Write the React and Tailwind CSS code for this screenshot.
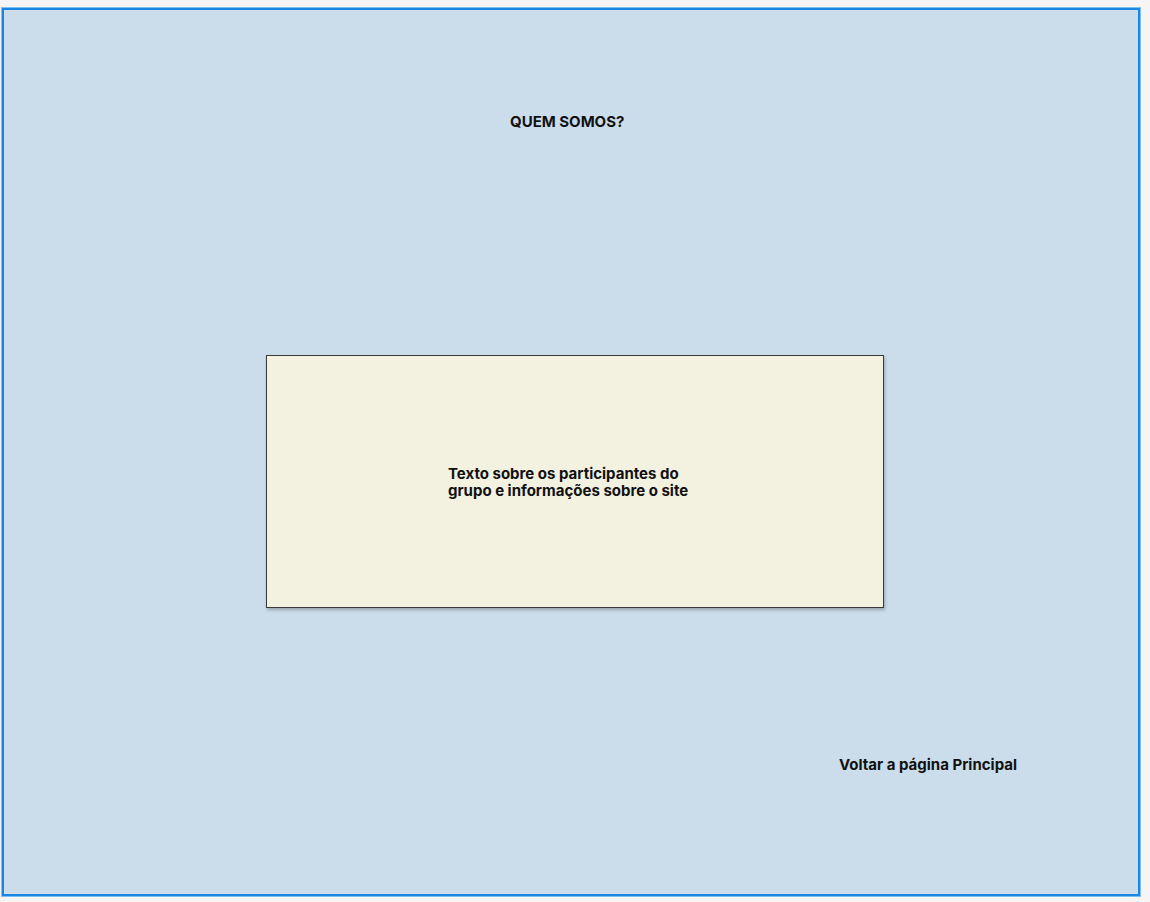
export default function App() {
  return (
    <div className="min-h-[902px] w-[1150px] bg-[#f5f5f5] pt-[7px] pl-px" style={{ fontFamily: 'Inter, "Noto Sans", sans-serif' }}>
      <div className="w-[1140px] h-[890px] border border-[#7cc0f2]">
        <div className="h-full border-2 border-[#1b87e0] bg-[#cbdcea] text-[#111111]">
          {/* Title */}
          <h1 className="pt-[103px] pl-[506px] text-[15px] leading-[18px] font-bold">QUEM SOMOS?</h1>

          {/* Content card */}
          <div className="mt-[224px] ml-[262px] w-[618px] h-[253px] border border-[#3a3a3a] bg-[#f3f2e1] shadow-[1px_2px_3px_rgba(0,0,0,0.25)] flex items-center pl-[181px]">
            <p className="text-[15px] leading-[17px] font-bold">
              Texto sobre os participantes do
              <br />
              grupo e informações sobre o site
            </p>
          </div>

          {/* Back link */}
          <a href="#" className="block mt-[148px] ml-[835px] w-fit text-[15px] leading-[18px] font-bold">
            Voltar a página Principal
          </a>
        </div>
      </div>
    </div>
  );
}
